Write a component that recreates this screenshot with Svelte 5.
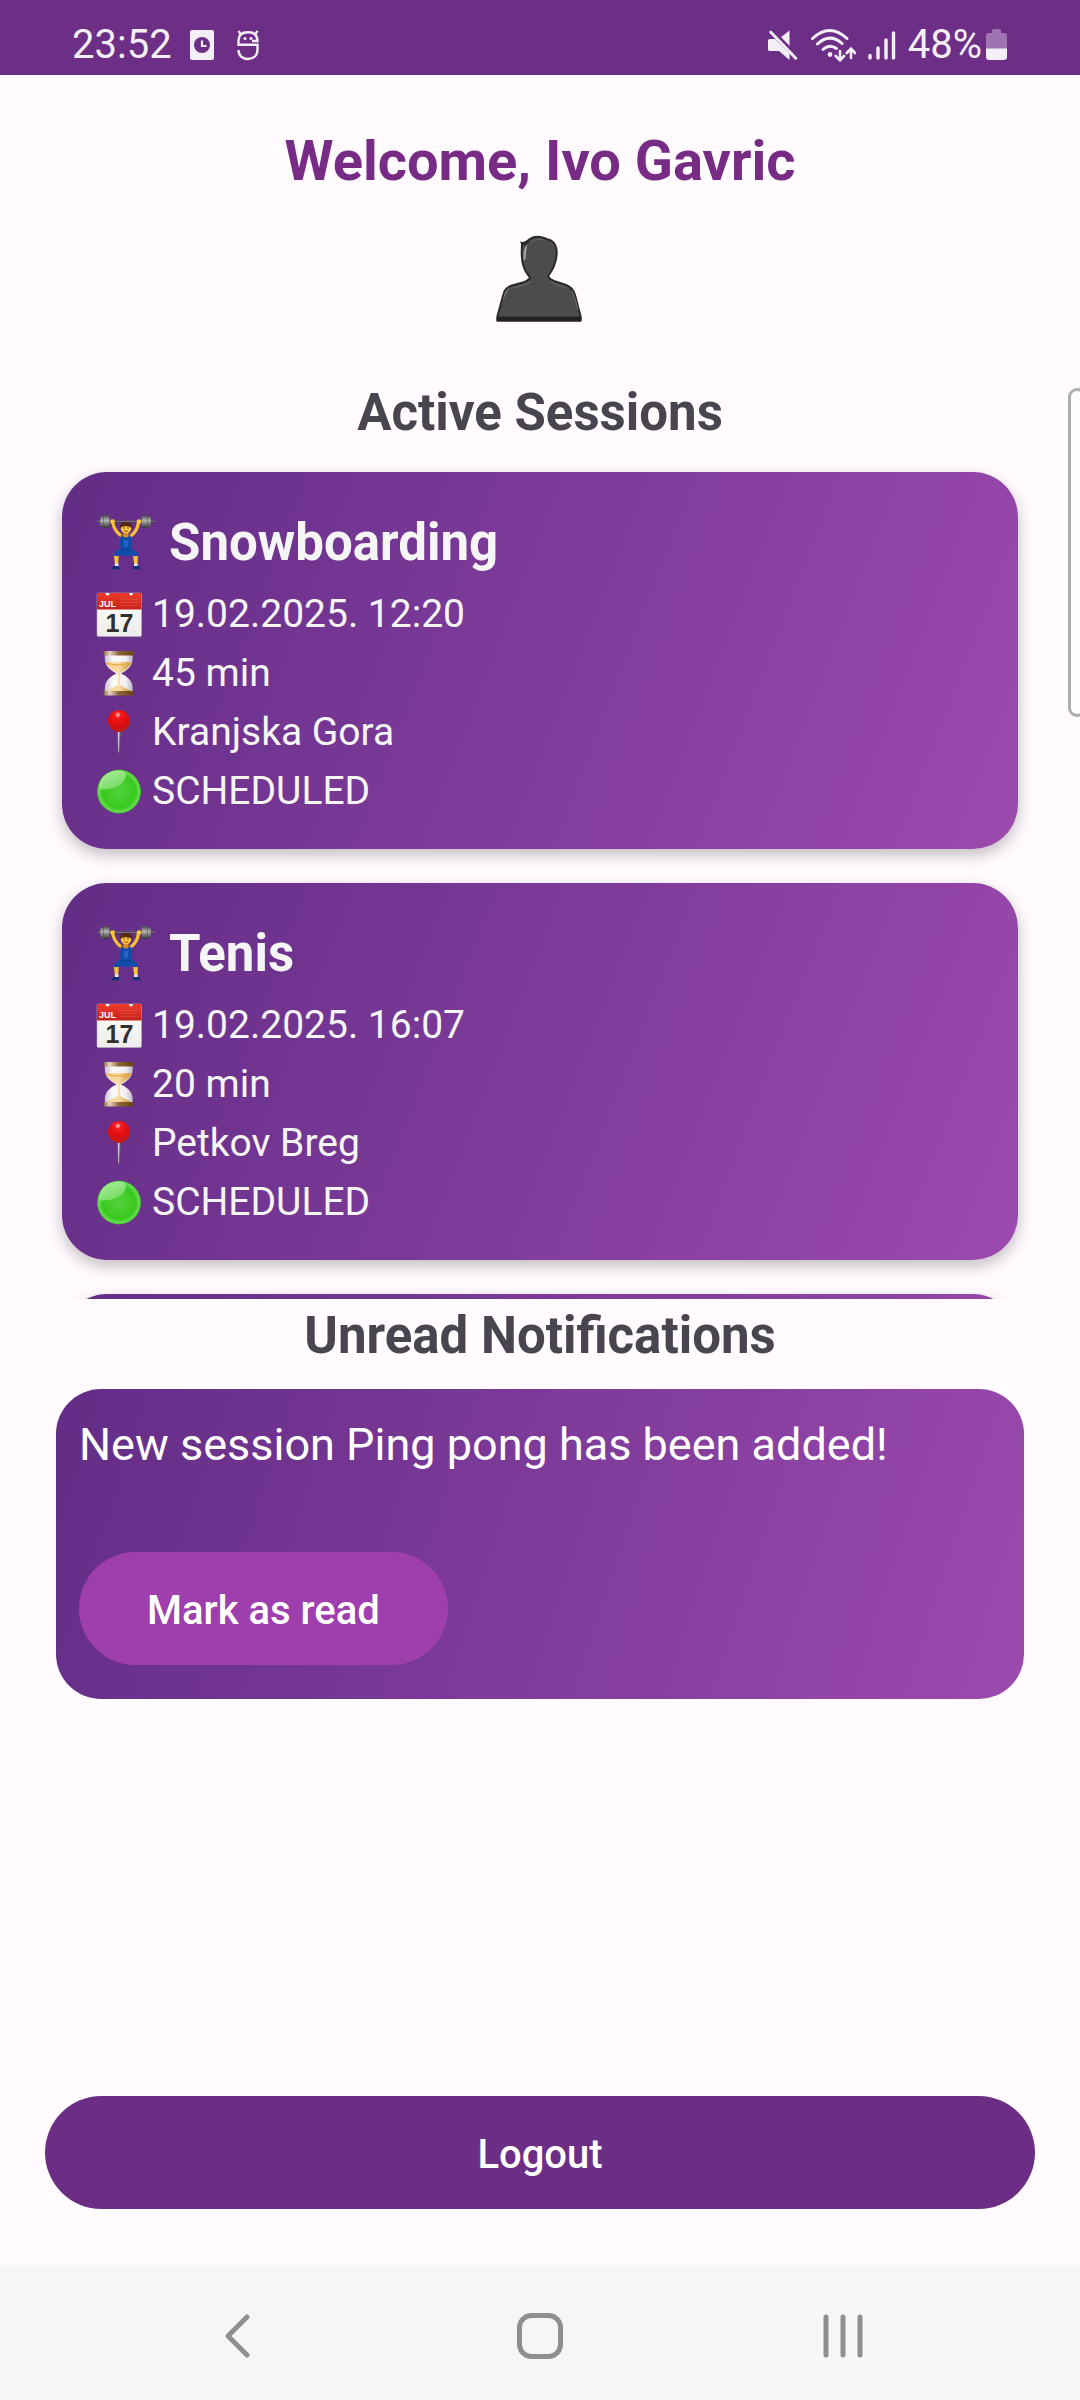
<script lang="ts">
  interface Session {
    name: string;
    date: string;
    duration: string;
    place: string;
    status: string;
  }

  const user = 'Ivo Gavric';
  const sessions: Session[] = [
    { name: 'Snowboarding', date: '19.02.2025. 12:20', duration: '45 min', place: 'Kranjska Gora', status: 'SCHEDULED' },
    { name: 'Tenis', date: '19.02.2025. 16:07', duration: '20 min', place: 'Petkov Breg', status: 'SCHEDULED' },
  ];
  let notifications = $state(['New session Ping pong has been added!']);

  function markAsRead(index: number) {
    notifications = notifications.filter((_, i) => i !== index);
  }
</script>

<!-- Shared gradients for the session icons -->
<svg class="defs" width="0" height="0" aria-hidden="true">
  <defs>
    <linearGradient id="plate" x1="0" y1="0" x2="0" y2="1">
      <stop offset="0" stop-color="#4a4a4a" />
      <stop offset="0.4" stop-color="#b4b4b4" />
      <stop offset="1" stop-color="#333" />
    </linearGradient>
    <linearGradient id="red" x1="0" y1="0" x2="0" y2="1">
      <stop offset="0" stop-color="#f03a2c" />
      <stop offset="1" stop-color="#c5221b" />
    </linearGradient>
    <linearGradient id="paper" x1="0" y1="0" x2="0" y2="1">
      <stop offset="0" stop-color="#fff" />
      <stop offset="1" stop-color="#ececea" />
    </linearGradient>
    <linearGradient id="wood" x1="0" y1="0" x2="1" y2="0">
      <stop offset="0" stop-color="#8b6a4a" />
      <stop offset="0.2" stop-color="#e8d6c4" />
      <stop offset="0.5" stop-color="#8a6538" />
      <stop offset="1" stop-color="#6b4310" />
    </linearGradient>
    <linearGradient id="glass" x1="0" y1="0" x2="1" y2="0">
      <stop offset="0" stop-color="#c9c3cf" />
      <stop offset="0.3" stop-color="#fbfbfb" />
      <stop offset="0.75" stop-color="#f2f0f2" />
      <stop offset="1" stop-color="#bdb4c4" />
    </linearGradient>
    <linearGradient id="sand" x1="0" y1="0" x2="1" y2="0">
      <stop offset="0" stop-color="#f7cf86" />
      <stop offset="0.5" stop-color="#fbdda6" />
      <stop offset="1" stop-color="#c98a2c" />
    </linearGradient>
    <radialGradient id="pinhead" cx="0.45" cy="0.22" r="0.8">
      <stop offset="0" stop-color="#ffd0cc" />
      <stop offset="0.18" stop-color="#f5191b" />
      <stop offset="0.6" stop-color="#dd0d10" />
      <stop offset="1" stop-color="#b5201f" />
    </radialGradient>
    <radialGradient id="ball" cx="0.5" cy="0.5" r="0.5">
      <stop offset="0" stop-color="#55d23e" />
      <stop offset="0.75" stop-color="#38c91d" />
      <stop offset="0.93" stop-color="#66dd52" />
      <stop offset="1" stop-color="#3aa82e" />
    </radialGradient>
    <linearGradient id="shine" x1="0.1" y1="0" x2="0.8" y2="1">
      <stop offset="0" stop-color="#b4f0a6" />
      <stop offset="0.5" stop-color="#a4ea96" />
      <stop offset="1" stop-color="#6edb5c" />
    </linearGradient>
  </defs>
</svg>

<div class="screen">
  <header class="status">
    <div class="status-left">
      <span>23:52</span>
      <svg width="32" height="32" viewBox="0 0 32 32" aria-hidden="true">
        <rect x="4" y="1" width="24" height="30" rx="2" fill="#f4eff7" />
        <circle cx="16" cy="16" r="8" fill="#6d2e86" />
        <path d="M16 11.500V17h4.500" fill="none" stroke="#f4eff7" stroke-width="2.200" />
      </svg>
      <svg width="32" height="32" viewBox="0 0 32 32" fill="none" stroke="#f4eff7" stroke-width="2.400" aria-hidden="true">
        <path d="M20 12H25.500C25.500 6 22 3.200 16 3.200S6.500 6 6.500 11.500V15.800H25.500V20.500C25.500 26.500 21.500 30 16 30S6.500 26.500 6.500 21" />
        <path d="M8.500 5 6.500 1.800M23.500 5l2-3.200" />
        <circle cx="13" cy="9.500" r="1.500" fill="#f4eff7" stroke="none" />
        <circle cx="19" cy="9.500" r="1.500" fill="#f4eff7" stroke="none" />
      </svg>
    </div>
    <div class="status-right">
      <svg width="30" height="32" viewBox="0 0 30 32" fill="#f4eff7" aria-hidden="true">
        <path d="M0 11.500Q0 10 2 10H7L21.500 24.500V31L11 22H2Q0 22 0 20.500Z" />
        <path d="M12.500 8.500 21.500 1.500V17Z" />
        <path d="m5 1.500 25 26" stroke="#6d2e86" stroke-width="2.500" />
        <path d="m2.800 3.200 25 26" stroke="#f4eff7" stroke-width="3" stroke-linecap="round" />
      </svg>
      <svg width="46" height="34" viewBox="0 0 46 34" fill="none" stroke="#f4eff7" stroke-width="3" stroke-linecap="round" aria-hidden="true">
        <path d="M2.500 10.500Q19.500-5.500 37 10.500M7.500 16Q20 4.500 32 15.500M13 21.500Q19.500 15.500 26.500 20.500" />
        <circle cx="20" cy="26.500" r="2.400" fill="#f4eff7" stroke="none" />
        <path d="M30 23v9m-4.300-4 4.300 4.300 4-4.300M41 30v-9m-4.300 4 4.300-4.300 4 4.300" stroke-width="2.600" />
      </svg>
      <svg width="28" height="32" viewBox="0 0 28 32" stroke="#f4eff7" stroke-width="3.400" stroke-linecap="round" aria-hidden="true">
        <path d="M2 26.500v2.500M10 19v10M18 11v18M25.500 4v25" />
      </svg>
      <div class="battery">
        <span>48%</span>
        <svg width="22" height="32" viewBox="0 0 22 32" aria-hidden="true">
          <path d="M6 2q0-2 2-2h5q2 0 2 2v2h3q3 0 3 3v13H0V7q0-3 3-3h3Z" fill="#a074b0" />
          <path d="M0 19.500h21V28q0 3-3 3H3q-3 0-3-3Z" fill="#f4eff7" />
        </svg>
      </div>
    </div>
  </header>

  <main>
    <h1>Welcome, {user}</h1>
    <svg class="avatar" width="90" height="90" viewBox="0 0 90 90" role="img" aria-label="Profile">
      <path
        d="M27 10C32 9.500 33 3 42 2.800C48 2.500 49 4.500 53 5.500C60 7 62.500 14 61.500 22C60.500 31 57 37 53.500 41.500Q53 44.500 59 47L71 51Q78 53.500 80 61L85.500 82V86.500H2.500V82L8.500 60Q10 53.500 17 51.500L28 48.500Q34.500 46 35 43.500C30 38 27 31 26.800 22C26.500 17 27 14 27 10Z"
        fill="#4c4c4c" stroke="#2a2a2a" stroke-width="2" stroke-linejoin="round" />
      <path d="M2.500 83.500H85.500V86.500H2.500Z" fill="#222" stroke="#222" stroke-width="2" stroke-linejoin="round" />
      <path d="M25 7.500Q29 9 34 5.500L34 9Q30 12 26.500 11Z" fill="#2a2a2a" />
      <path d="M28.800 27Q27.500 15 32.500 10.500Q30.500 18 30.500 25Z" fill="#a8a8a8" />
      <path d="M8 67Q9.500 55 15 53.500Q11 58 8 67Z" fill="#808080" />
      <path d="M36 8Q41 4.500 48 5.500M16 54.500Q31 51 36.500 47M55.500 47.500Q61 51.500 71 53.500M77 57Q81 66 83 76" fill="none" stroke="#666" stroke-width="1.200" />
    </svg>

    <h2>Active Sessions</h2>
    <section class="sessions" aria-label="Active Sessions">
      {#each sessions as session}
        <article class="session">
          <h3>
            <svg width="60" height="60" viewBox="0 0 60 60" aria-hidden="true">
              <path d="M2 8.700H60" stroke="#3a3a3a" stroke-width="1.800" />
              <path d="M2 8.300H60" stroke="#a0a0a0" stroke-width="0.700" />
              <path d="M5.300 3.500h2.700v10.500H5.300zM8.500 2.300h5.800v12.700H8.500zM46.700 2.300h5.800v12.700h-5.800zM53 3.500h2.700v10.500H53z" fill="url(#plate)" />
              <path d="M17.500 9Q19.500 18.500 26.500 23M43.500 9Q42.500 18.500 35.500 23" fill="none" stroke="#f9c22e" stroke-width="3.200" stroke-linecap="round" />
              <circle cx="17.500" cy="8.500" r="2.300" fill="#ffca3a" />
              <circle cx="44" cy="8.500" r="2.300" fill="#ffca3a" />
              <path d="M28.500 18h5v7h-5z" fill="#d98a25" />
              <circle cx="31" cy="15" r="5.300" fill="#ffc93c" />
              <path d="M25 15.500Q24 9 31 9T37 15.500Q35.500 13 30 13.200Q26.500 13.200 25 15.500Z" fill="#56290f" />
              <path d="M28.800 17.700Q31 19.200 33.200 17.700" fill="none" stroke="#9c4a12" stroke-width="1" />
              <circle cx="29" cy="15" r="0.700" fill="#4a2a14" />
              <circle cx="33" cy="15" r="0.700" fill="#4a2a14" />
              <path d="M18.800 41.500l4.900 1-.5 8.500h-3.300zM38 42.500l4.900-1-.3 9.500h-3.300z" fill="#fbc535" />
              <path d="M26.500 21Q27.500 24.500 31 24.500T35 21Q37.500 27 36.300 36Q42 37 43.300 42.500Q40 44 36 42Q31 44 26 42Q22 44 18.700 42.500Q20 37 25.700 36Q24.300 27 26.500 21Z" fill="#0f4dab" />
              <path d="M28.500 26Q31 28.500 33.500 26L33 34H29Z" fill="#2563c2" />
              <path d="M26 36.800H36" stroke="#0a3880" stroke-width="0.800" />
              <path d="M19.900 50.500h3.600v2.800h-3.600zM39 50.500h3.600v2.800H39z" fill="#e7ecf5" />
              <path d="M16.500 56.300v-1.700l3-1.600h4.500v3.300zM45.700 56.300v-1.700l-3-1.600h-4.500v3.300z" fill="#12307a" />
            </svg>
            <span>{session.name}</span>
          </h3>
          <ul>
            <li>
              <svg width="48" height="48" viewBox="0 0 48 48" aria-hidden="true">
                <rect x="2" y="2" width="44.500" height="43.500" rx="1.500" fill="url(#paper)" stroke="#b9a9bd" stroke-width="0.600" />
                <path d="M2 18.500V3q0-1 1-1h7.500q0 2.500 2 2.500t2-2.500h19.500q0 2.500 2 2.500t2-2.500h7.500q1 0 1 1v15.500z" fill="url(#red)" />
                <path d="M26 8.500H44.500M26 11.500H44.500M26 14.500H44.500" stroke="#e07a70" stroke-width="0.800" stroke-dasharray="1 1.600" />
                <text class="month" x="4" y="16">JUL</text>
                <text class="day" x="24.500" y="41" text-anchor="middle">17</text>
              </svg>
              <span>{session.date}</span>
            </li>
            <li>
              <svg width="48" height="48" viewBox="0 0 48 48" aria-hidden="true">
                <path d="M10 4H37.500C38.500 14 36 18 26 23.500C36 28.500 38.500 33 37.500 42H10C9 33 11.500 28.500 21.500 23.500C11.500 18 9 14 10 4Z" fill="url(#glass)" />
                <path d="M11 12.500Q24 11 36.500 12.500Q34 18 26 22.500L24.800 25V35L36 41H11.500L23 35V25L21.500 22.500Q13 18 11 12.500Z" fill="url(#sand)" />
                <path d="M11.500 13.300Q24 16.500 36 13.300" fill="none" stroke="#e9a94a" stroke-width="1.200" />
                <rect x="8.700" y="1" width="30" height="4.500" rx="1" fill="url(#wood)" />
                <rect x="8.700" y="41" width="30" height="4.500" rx="1" fill="url(#wood)" />
              </svg>
              <span>{session.duration}</span>
            </li>
            <li>
              <svg width="48" height="48" viewBox="0 0 48 48" aria-hidden="true">
                <path d="M22 21h4l-1.800 23.500h-1.200z" fill="#6d6670" />
                <path d="M23 22h1.500l-.6 21h-.5z" fill="#d8d4da" />
                <circle cx="24" cy="12" r="11" fill="url(#pinhead)" />
              </svg>
              <span>{session.place}</span>
            </li>
            <li>
              <svg width="48" height="48" viewBox="0 0 48 48" aria-hidden="true">
                <circle cx="24" cy="23.500" r="22" fill="url(#ball)" />
                <path d="M4 21.500Q3.500 11 12 5.500Q20 1 29 3.500Q33 7 29 13Q22 22.500 4 21.500Z" fill="url(#shine)" opacity="0.800" />
              </svg>
              <span>{session.status}</span>
            </li>
          </ul>
        </article>
      {/each}
      <article class="session next" aria-hidden="true"></article>
    </section>

    <h2 class="unread">Unread Notifications</h2>
    {#each notifications as message, i}
      <article class="notification">
        <p>{message}</p>
        <button class="read" type="button" onclick={() => markAsRead(i)}>Mark as read</button>
      </article>
    {/each}

    <button class="logout" type="button">Logout</button>
  </main>

  <nav aria-label="System navigation">
    <button type="button" aria-label="Back">
      <svg width="48" height="48" viewBox="0 0 48 48"><path d="M34 5 15 24 34 43" /></svg>
    </button>
    <button type="button" aria-label="Home">
      <svg width="48" height="48" viewBox="0 0 48 48"><rect x="3.500" y="3.500" width="41" height="41" rx="12" /></svg>
    </button>
    <button type="button" aria-label="Recent apps">
      <svg width="48" height="48" viewBox="0 0 48 48"><path d="M7 5v38M24 5v38M41 5v38" /></svg>
    </button>
  </nav>

  <div class="edge" aria-hidden="true"></div>
</div>

<style>
  :global(body) {
    margin: 0;
    background: #fffbff;
  }
  .defs {
    position: absolute;
  }
  .screen {
    position: relative;
    display: flex;
    flex-direction: column;
    min-height: 100vh;
    overflow: hidden;
    background: #fffbff;
    font-family: Roboto, 'Liberation Sans', sans-serif;
  }
  svg {
    display: block;
    flex: none;
  }
  .status {
    display: flex;
    justify-content: space-between;
    box-sizing: border-box;
    height: 75px;
    padding: 15px 72px 0;
    background: #6d2e86;
    color: #f4eff7;
    font-size: 40px;
    line-height: 60px;
  }
  .status-left,
  .status-right,
  .battery {
    display: flex;
    align-items: center;
  }
  .status-left {
    gap: 14px;
  }
  .status-right {
    gap: 12px;
  }
  .battery {
    gap: 4px;
  }
  main {
    flex: 1;
    display: flex;
    flex-direction: column;
    padding: 53px 45px 56px;
  }
  h1,
  h2,
  h3,
  p,
  ul {
    margin: 0;
    padding: 0;
  }
  h1 {
    color: #772b85;
    font-size: 56px;
    line-height: 66px;
    text-align: center;
  }
  .avatar {
    align-self: center;
    margin-top: 40px;
  }
  h2 {
    margin-top: 59px;
    color: #49454f;
    font-size: 51px;
    line-height: 60px;
    text-align: center;
  }
  h2.unread {
    margin-top: 7px;
  }
  .sessions {
    display: flex;
    flex-direction: column;
    gap: 34px;
    box-sizing: border-box;
    max-height: 846px;
    margin-top: 10px;
    padding: 19px 17px 0;
    overflow: hidden;
  }
  .session {
    flex: none;
    padding: 41px 33px 28px;
    border-radius: 45px;
    background: linear-gradient(111deg, #622d86, #9c4aae);
    box-shadow: 0 6px 16px rgba(0, 0, 0, 0.25);
    color: #f5f5f5;
  }
  .next {
    min-height: 308px;
  }
  h3 {
    display: flex;
    align-items: center;
    gap: 14px;
    font-size: 51px;
    line-height: 60px;
  }
  ul {
    margin-top: 12px;
    list-style: none;
  }
  li {
    display: flex;
    align-items: center;
    gap: 9px;
    font-size: 39px;
    line-height: 59px;
  }
  .month,
  .day {
    font-family: 'Liberation Sans', Arial, sans-serif;
    font-weight: 700;
  }
  .month {
    font-size: 9px;
    fill: #fff;
  }
  .day {
    font-size: 25px;
    fill: #2f2f2f;
  }
  .notification {
    margin: 23px 11px 0;
    padding: 29px 23px 34px;
    border-radius: 45px;
    background: linear-gradient(108deg, #622d86, #9c4aae);
    color: #fff;
  }
  .notification p {
    font-size: 45px;
    line-height: 53px;
  }
  button {
    border: 0;
    font-family: inherit;
    cursor: pointer;
  }
  .read,
  .logout {
    padding: 35px 68px 31px;
    border-radius: 57px;
    color: #fff;
    font-size: 40px;
    font-weight: 500;
    line-height: 47px;
  }
  .read {
    margin-top: 81px;
    background: #9e3fad;
  }
  .logout {
    margin-top: auto;
    background: #6c2e85;
  }
  nav {
    display: flex;
    justify-content: center;
    gap: 255px;
    padding: 47px 0 40px;
    background: #f6f6f6;
  }
  nav button {
    padding: 0;
    background: none;
  }
  nav svg {
    fill: none;
    stroke: #8f8f8f;
    stroke-width: 5;
    stroke-linecap: round;
    stroke-linejoin: round;
  }
  .edge {
    position: absolute;
    top: 388px;
    right: -6px;
    box-sizing: border-box;
    width: 18px;
    height: 329px;
    border: 3px solid #adadad;
    border-radius: 12px;
    background: #fdfdfd;
  }
</style>
